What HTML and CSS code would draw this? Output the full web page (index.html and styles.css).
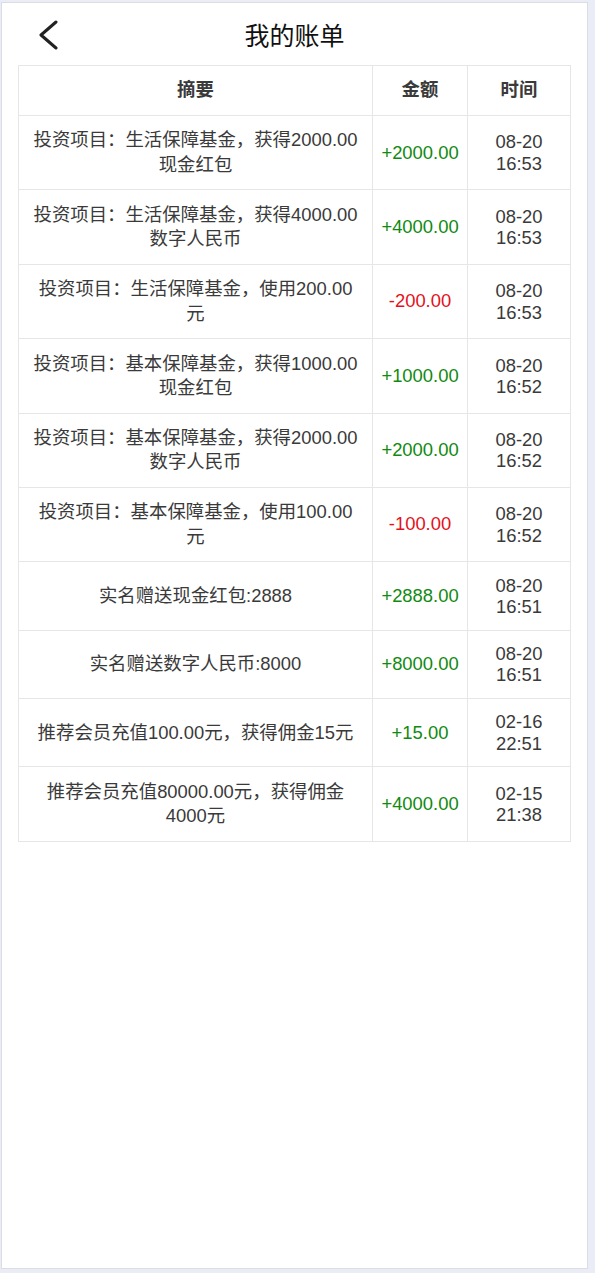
FILE: index.html
```html
<!DOCTYPE html>
<html>
<head>
    <meta charset="UTF-8">
    <title>我的账单</title>
    <link rel="stylesheet" href="styles.css">
</head>
<body>
    <div class="page">
        <div class="topbar">
            <a class="back" href="#">
                <svg width="22" height="30" viewBox="0 0 22 30">
                    <polyline points="19,2 4,15 19,28" fill="none" stroke="#222" stroke-width="3" stroke-linecap="round" stroke-linejoin="round"/>
                </svg>
            </a>
            <h1 class="title">我的账单</h1>
            <span></span>
        </div>
        <table class="bill">
            <colgroup>
                <col class="c-desc">
                <col class="c-amt">
                <col class="c-time">
            </colgroup>
            <thead>
                <tr>
                    <th>摘要</th>
                    <th>金额</th>
                    <th>时间</th>
                </tr>
            </thead>
            <tbody>
                <tr>
                    <td class="desc">投资项目：生活保障基金，获得2000.00现金红包</td>
                    <td class="amt plus">+2000.00</td>
                    <td class="time">08-20<br>16:53</td>
                </tr>
                <tr>
                    <td class="desc">投资项目：生活保障基金，获得4000.00数字人民币</td>
                    <td class="amt plus">+4000.00</td>
                    <td class="time">08-20<br>16:53</td>
                </tr>
                <tr>
                    <td class="desc">投资项目：生活保障基金，使用200.00元</td>
                    <td class="amt minus">-200.00</td>
                    <td class="time">08-20<br>16:53</td>
                </tr>
                <tr>
                    <td class="desc">投资项目：基本保障基金，获得1000.00现金红包</td>
                    <td class="amt plus">+1000.00</td>
                    <td class="time">08-20<br>16:52</td>
                </tr>
                <tr>
                    <td class="desc">投资项目：基本保障基金，获得2000.00数字人民币</td>
                    <td class="amt plus">+2000.00</td>
                    <td class="time">08-20<br>16:52</td>
                </tr>
                <tr>
                    <td class="desc">投资项目：基本保障基金，使用100.00元</td>
                    <td class="amt minus">-100.00</td>
                    <td class="time">08-20<br>16:52</td>
                </tr>
                <tr>
                    <td class="desc">实名赠送现金红包:2888</td>
                    <td class="amt plus">+2888.00</td>
                    <td class="time">08-20<br>16:51</td>
                </tr>
                <tr>
                    <td class="desc">实名赠送数字人民币:8000</td>
                    <td class="amt plus">+8000.00</td>
                    <td class="time">08-20<br>16:51</td>
                </tr>
                <tr>
                    <td class="desc">推荐会员充值100.00元，获得佣金15元</td>
                    <td class="amt plus">+15.00</td>
                    <td class="time">02-16<br>22:51</td>
                </tr>
                <tr>
                    <td class="desc">推荐会员充值80000.00元，获得佣金4000元</td>
                    <td class="amt plus">+4000.00</td>
                    <td class="time">02-15<br>21:38</td>
                </tr>
            </tbody>
        </table>
    </div>
</body>
</html>
```
FILE: styles.css
```css
body {
    margin: 0;
    background-color: #eaecf6;
    font-family: "Liberation Sans", "Noto Sans CJK SC", sans-serif;
    color: #3a3a3a;
}
.page {
    box-sizing: border-box;
    margin: 2px 7px 0 1px;
    height: 1267px;
    background-color: #fff;
    border: 1px solid #dcdde3;
}
.topbar {
    display: grid;
    grid-template-columns: 1fr auto 1fr;
    align-items: center;
    height: 62px;
}
.back {
    display: flex;
    padding-left: 35px;
    padding-top: 2px;
}
.title {
    margin: 0;
    font-size: 25px;
    font-weight: normal;
    color: #111;
}
.bill {
    table-layout: fixed;
    border-collapse: collapse;
    width: 553px;
    margin: 0 16px;
    font-size: 18.4px;
}
.c-desc {
    width: 354px;
}
.c-amt {
    width: 95px;
}
.bill th,
.bill td {
    border: 1px solid #e6e6e6;
    padding: 12.4px 6px;
    text-align: center;
    vertical-align: middle;
    line-height: 24.3px;
}
.bill th {
    font-weight: bold;
    color: #3a3a3a;
}
.bill td.desc {
    padding-left: 14px;
    padding-right: 14px;
}
.bill td.time {
    line-height: 21.3px;
}
.plus {
    color: #118a11;
}
.minus {
    color: #e3121c;
}
```
